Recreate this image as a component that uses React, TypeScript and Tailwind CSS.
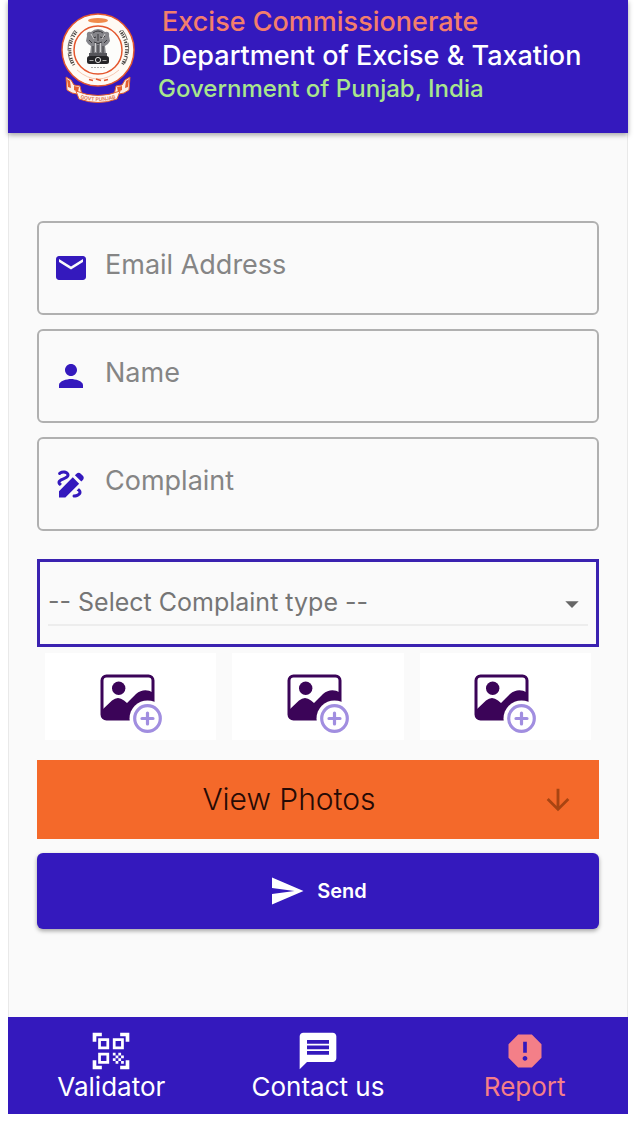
import type { ComponentType } from "react";
import {
    MdArrowDownward,
    MdArrowDropDown,
    MdDraw,
    MdEmail,
    MdMessage,
    MdPerson,
    MdQrCodeScanner,
    MdReport,
    MdSend,
} from "react-icons/md";

// --- TYPES ---
type IconType = ComponentType<{ size?: number; className?: string }>;

interface Field {
    id: string;
    label: string;
    type: string;
    icon: IconType;
}

interface NavItem {
    label: string;
    icon: IconType;
    active?: boolean;
}

// --- DATA ---
const FIELDS: Field[] = [
    { id: "email", label: "Email Address", type: "email", icon: MdEmail },
    { id: "name", label: "Name", type: "text", icon: MdPerson },
    { id: "complaint", label: "Complaint", type: "text", icon: MdDraw },
];

const NAV_ITEMS: NavItem[] = [
    { label: "Validator", icon: MdQrCodeScanner },
    { label: "Contact us", icon: MdMessage },
    { label: "Report", icon: MdReport, active: true },
];

// State seal: round emblem with the ribbon under it
function Emblem() {
    return (
        <svg viewBox="0 0 76 92" className="h-[92px] w-[76px] shrink-0" role="img" aria-label="Government of Punjab">
            {/* Ribbon */}
            <path d="M6 65 L11 68 L14 73 L20 74 L22 83 L12 81 L7 78 Z" fill="#fbeee6" stroke="#e4602f" strokeWidth="1" />
            <path d="M70 65 L65 68 L62 73 L56 74 L54 83 L64 81 L69 78 Z" fill="#fbeee6" stroke="#e4602f" strokeWidth="1" />
            <path d="M7 67 L10 69 L11 76 L8 75 Z M14 74 L19 75 L18 80 L14 78 Z" fill="#e4602f" />
            <path d="M69 67 L66 69 L65 76 L68 75 Z M62 74 L57 75 L58 80 L62 78 Z" fill="#e4602f" />
            <path d="M16 79 Q38 88 60 79 L57 87 Q38 94 19 87 Z" fill="#fdf3ec" stroke="#e4602f" strokeWidth="1" />
            <path id="ribbon" d="M19 86 Q38 92 57 86" fill="none" />
            <text fontSize="5" fontFamily="Inter, sans-serif" fontWeight="600" fill="#dc7048" textAnchor="middle">
                <textPath href="#ribbon" startOffset="50%">GOVT PUNJAB</textPath>
            </text>

            {/* Rings */}
            <circle cx="38" cy="38" r="36" fill="#fffaf4" stroke="#e4572e" strokeWidth="1.500" />
            <circle cx="38" cy="38" r="24" fill="#fdfdfb" stroke="#e4572e" strokeWidth="1.500" />
            <ellipse cx="38" cy="8.500" rx="10" ry="2.600" fill="#f08a4a" />
            <path d="M17 58 Q38 76 59 58" fill="none" stroke="#f6c9b3" strokeWidth="1" />
            <path d="M29 67.500 l4 1 M36 67 l5 1.500 M44 68.500 l4 -1" stroke="#e4572e" strokeWidth="1.600" />

            {/* Lettering round the rim */}
            <g fill="none" stroke="#4a4644">
                <path d="M14 53 A29 29 0 0 1 17 19" strokeWidth="3" strokeDasharray="1 1.200 1.500 .8 1 1 1.200 2.200" />
                <path d="M11.500 52 A31 31 0 0 1 15 18" strokeWidth=".8" strokeDasharray="11 3" />
                <path d="M60 19 A29 29 0 0 1 62 53" strokeWidth="3" strokeDasharray="1 1.200 1.500 .8 1 1 1.200 2.200" />
                <path d="M62.500 18 A31 31 0 0 1 64.500 52" strokeWidth=".8" strokeDasharray="11 3" />
            </g>

            {/* Lion capital */}
            <g fill="#85858a">
                <path d="M27 24 Q26 19 31 20 Q34 17 38 17 Q42 17 45 20 Q50 19 49 24 L50 29 Q48 33 45 34 L46 42 L30 42 L31 34 Q28 33 26 29 Z" />
                <path d="M29 41 h18 v3 h-18 Z" fill="#55555a" />
            </g>
            <g fill="none" stroke="#38383c" strokeWidth="1">
                <path d="M33 21 q5 -4 10 0 M32 24 q2 3 4 1 M40 25 q3 2 5 -1 M38 22 v7 M34 30 q4 3 8 0" />
                <path d="M33 34 v7 M38 33 v8 M43 34 v7 M29 28 l3 3 M47 28 l-3 3" />
            </g>
            <g fill="none" stroke="#e6e6e6" strokeWidth=".8">
                <path d="M35.500 31 v9 M40.500 31 v9 M31 22 l3 5 M45 22 l-3 5" />
            </g>
            <rect x="27" y="44" width="22" height="8" rx="2.500" fill="#252528" />
            <circle cx="38" cy="48" r="2.600" fill="none" stroke="#ddd" strokeWidth="1" />
            <path d="M29.500 48.500 h4 M42.500 48.500 h4" stroke="#aaa" strokeWidth="1" />
            <path d="M31 55.500 h15" stroke="#aaa" strokeWidth="1" strokeDasharray="2 1" />
        </svg>
    );
}

// Picture frame with a plus badge
function AddPhotoIcon() {
    return (
        <svg viewBox="0 0 62 60" className="h-[60px] w-[62px]" aria-hidden="true">
            <rect x="2" y="2" width="51" height="43" rx="4.500" fill="#fff" stroke="#3b0458" strokeWidth="3" />
            <circle cx="18.700" cy="14.300" r="6.700" fill="#3b0458" />
            <path d="M2 36 L12 26.500 Q18 21.500 24 26.500 L27 29 L36 20 Q44 13.500 53 18.500 V41 Q53 45 49 45 H6 Q2 45 2 41 Z" fill="#3b0458" />
            <circle cx="47.500" cy="44.500" r="18" fill="#fff" />
            <circle cx="47.500" cy="44.500" r="12.800" fill="#fff" stroke="#a18ee0" strokeWidth="3.200" />
            <path d="M42 44.500 H53 M47.500 39 V50" stroke="#a18ee0" strokeWidth="3.200" strokeLinecap="round" />
        </svg>
    );
}

export default function App() {
    return (
        <div className="min-h-screen bg-white pl-2 pr-3 font-['Inter',sans-serif]">

            {/* Header */}
            <header className="relative flex h-[133px] items-start bg-[#3419bd] pl-[52px] pt-[5px] shadow-[0_2px_5px_rgba(0,0,0,0.35)]">
                <div className="pt-[7px]">
                    <Emblem />
                </div>
                <div className="whitespace-nowrap pl-[22px] text-[27px] font-medium leading-[34px]">
                    <p className="pl-1 text-[#f37e6c]">Excise Commissionerate</p>
                    <p className="pl-1 text-white">Department of Excise &amp; Taxation</p>
                    <p className="text-[24px] leading-[32px] text-[#a9e68c]">Government of Punjab, India</p>
                </div>
            </header>

            <main className="border-x border-[#e9e9e9] bg-[#fafafa] px-7 pb-[88px] pt-[88px]">
                <form onSubmit={(e) => e.preventDefault()}>

                    {/* Text fields */}
                    <div className="flex flex-col gap-3.5">
                        {FIELDS.map(({ id, label, type, icon: Icon }) => (
                            <div key={id} className="flex h-[94px] items-center rounded-md border-2 border-[#b0b0b0] pl-3.5">
                                <label htmlFor={id} aria-label={label} className="text-[#3419bd]">
                                    <Icon size={36} />
                                </label>
                                <input
                                    id={id}
                                    type={type}
                                    placeholder={label}
                                    className="ml-4 min-w-0 flex-1 bg-transparent pb-1.5 text-[27px] text-[#555] outline-none placeholder:text-[#858585]"
                                />
                            </div>
                        ))}
                    </div>

                    {/* Complaint type */}
                    <label htmlFor="complaint-type" className="mt-7 block border-[3px] border-[#3a22b0] px-2 pb-[18px] pt-[20px]">
                        <div className="relative">
                            <select
                                id="complaint-type"
                                aria-label="Complaint type"
                                className="block h-11 w-full appearance-none border-b-2 border-[#ededed] bg-transparent text-[25px] text-[#757575] outline-none"
                            >
                                <option>-- Select Complaint type --</option>
                            </select>
                            <MdArrowDropDown size={32} className="pointer-events-none absolute right-0 top-1.5 text-[#666]" />
                        </div>
                    </label>

                    {/* Photo slots */}
                    <div className="mt-1.5 grid grid-cols-3 gap-4 px-2">
                        {[1, 2, 3].map((slot) => (
                            <button
                                key={slot}
                                type="button"
                                aria-label={`Add photo ${slot}`}
                                className="flex h-[87px] items-end justify-center bg-white pb-1.5"
                            >
                                <AddPhotoIcon />
                            </button>
                        ))}
                    </div>

                    <button type="button" className="mt-5 flex h-[79px] w-full items-center bg-[#f4692a] pr-6">
                        <span className="flex-1 text-center text-[30px] font-light text-[#260a05]">View Photos</span>
                        <MdArrowDownward size={34} className="text-[#a84412]" />
                    </button>

                    <button
                        type="submit"
                        className="mt-3.5 flex h-[76px] w-full items-center justify-center gap-3 rounded-md bg-[#3419bd] text-white shadow-[0_2px_4px_rgba(0,0,0,0.35)]"
                    >
                        <MdSend size={36} />
                        <span className="text-[20px] font-semibold">Send</span>
                    </button>
                </form>
            </main>

            {/* Bottom navigation */}
            <nav className="grid h-[97px] grid-cols-3 bg-[#3419bd]">
                {NAV_ITEMS.map(({ label, icon: Icon, active }) => (
                    <a
                        key={label}
                        href="#"
                        className={`flex flex-col items-center pt-3 ${active ? "text-[#f47f88]" : "text-white"}`}
                    >
                        <Icon size={44} />
                        <span className="text-[26px] leading-7">{label}</span>
                    </a>
                ))}
            </nav>
        </div>
    );
}
